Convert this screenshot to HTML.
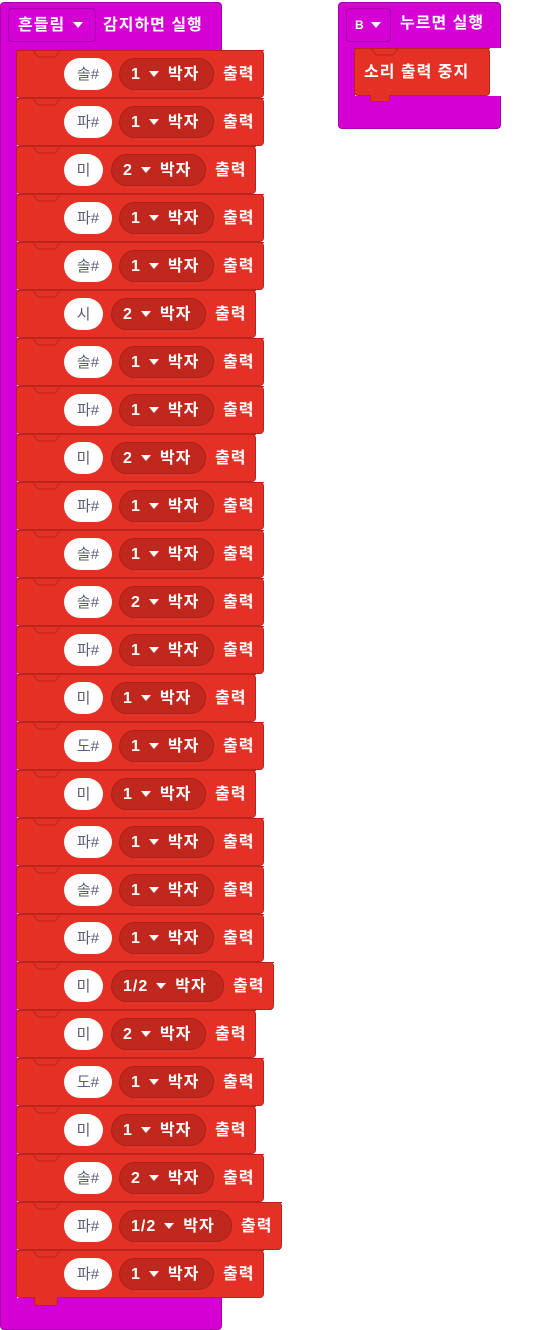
<!DOCTYPE html>
<html><head><meta charset="utf-8"><style>
*{box-sizing:border-box;margin:0;padding:0}
body{width:542px;height:1330px;background:#fff;position:relative;overflow:hidden;font-family:"Liberation Sans","Noto Sans CJK KR",sans-serif;font-weight:bold;font-size:16px;letter-spacing:1px;color:#fff}
.hat{position:absolute;background:#d400d4;border:1px solid #a900a9;border-radius:4px}
.dd{position:absolute;border:1px solid #a900a9;border-radius:4px;background:#d400d4;height:34px;line-height:33px;padding-left:9px}
.tri{display:inline-block;width:0;height:0;border-left:5px solid transparent;border-right:5px solid transparent;border-top:6px solid #fff;vertical-align:middle;margin:0 9px 2px 8px}
.b{position:absolute;left:16px;height:48px;background:#e53025;border:1px solid #b8251c;border-radius:4px}
.b svg{position:absolute;left:-1px;top:-1px;width:calc(100% + 2px);height:10px;overflow:hidden}
.o{position:absolute;top:7px;left:47px;height:32px;background:#fff;border-radius:16px;color:#575e75;font-weight:normal;text-align:center;line-height:33px;font-size:15px;letter-spacing:0}
.n2{width:48px}.n1{width:39px}
.p{position:absolute;top:7px;height:32px;background:#c0281e;border:1px solid #a8221a;border-radius:16px;line-height:32px;padding-left:11px;white-space:nowrap}
.s1{width:95px}.sh{width:113px}
.t{position:absolute;top:8px;line-height:32px}
</style></head><body>

<div class="hat" style="left:0;top:2px;width:222px;height:1328px"></div>
<div style="position:absolute;left:16px;top:50px;width:300px;height:1248px;background:#fff"></div>
<div style="position:absolute;left:0;top:50px;width:17px;height:1250px;background:#d400d4;border-left:1px solid #a900a9"></div>
<div class="dd" style="left:8px;top:8px;width:88px">흔들림<span class="tri" style="margin-right:0"></span></div>
<div style="position:absolute;left:103px;top:9px;line-height:34px">감지하면 실행</div>

<div class="hat" style="left:338px;top:2px;width:163px;height:127px"></div>
<div style="position:absolute;left:354px;top:48px;width:147px;height:48px;background:#fff"></div>
<div style="position:absolute;left:338px;top:48px;width:17px;height:50px;background:#d400d4;border-left:1px solid #a900a9"></div>
<div class="dd" style="left:346px;top:8px;width:45px;padding-left:8px;font-size:12px">B<span class="tri" style="margin:0 0 2px 6px"></span></div>
<div style="position:absolute;left:400px;top:8px;line-height:32px">누르면 실행</div>
<div class="b" style="left:354px;top:48px;width:136px;height:48px"><svg><path d="M0 .5H17L22 7H39L44 .5H300" fill="none" stroke="#b8251c"/></svg><span style="position:absolute;left:9px;top:8px;line-height:32px">소리 출력 중지</span></div>
<div style="position:absolute;left:370px;top:95px;width:20px;height:7px;background:#e53025;border:1px solid #b8251c;border-top:none;border-radius:0 0 3px 3px"></div>

<div class="b" style="top:50px;width:248px"><svg><path d="M0 .5H17L22 7H39L44 .5H300" fill="none" stroke="#b8251c"/></svg><div class="o n2">솔#</div><div class="p s1" style="left:102px">1<span class="tri"></span>박자</div><div class="t" style="left:206px">출력</div></div>
<div class="b" style="top:98px;width:248px"><svg><path d="M0 .5H17L22 7H39L44 .5H300" fill="none" stroke="#b8251c"/></svg><div class="o n2">파#</div><div class="p s1" style="left:102px">1<span class="tri"></span>박자</div><div class="t" style="left:206px">출력</div></div>
<div class="b" style="top:146px;width:240px"><svg><path d="M0 .5H17L22 7H39L44 .5H300" fill="none" stroke="#b8251c"/></svg><div class="o n1">미</div><div class="p s1" style="left:94px">2<span class="tri"></span>박자</div><div class="t" style="left:198px">출력</div></div>
<div class="b" style="top:194px;width:248px"><svg><path d="M0 .5H17L22 7H39L44 .5H300" fill="none" stroke="#b8251c"/></svg><div class="o n2">파#</div><div class="p s1" style="left:102px">1<span class="tri"></span>박자</div><div class="t" style="left:206px">출력</div></div>
<div class="b" style="top:242px;width:248px"><svg><path d="M0 .5H17L22 7H39L44 .5H300" fill="none" stroke="#b8251c"/></svg><div class="o n2">솔#</div><div class="p s1" style="left:102px">1<span class="tri"></span>박자</div><div class="t" style="left:206px">출력</div></div>
<div class="b" style="top:290px;width:240px"><svg><path d="M0 .5H17L22 7H39L44 .5H300" fill="none" stroke="#b8251c"/></svg><div class="o n1">시</div><div class="p s1" style="left:94px">2<span class="tri"></span>박자</div><div class="t" style="left:198px">출력</div></div>
<div class="b" style="top:338px;width:248px"><svg><path d="M0 .5H17L22 7H39L44 .5H300" fill="none" stroke="#b8251c"/></svg><div class="o n2">솔#</div><div class="p s1" style="left:102px">1<span class="tri"></span>박자</div><div class="t" style="left:206px">출력</div></div>
<div class="b" style="top:386px;width:248px"><svg><path d="M0 .5H17L22 7H39L44 .5H300" fill="none" stroke="#b8251c"/></svg><div class="o n2">파#</div><div class="p s1" style="left:102px">1<span class="tri"></span>박자</div><div class="t" style="left:206px">출력</div></div>
<div class="b" style="top:434px;width:240px"><svg><path d="M0 .5H17L22 7H39L44 .5H300" fill="none" stroke="#b8251c"/></svg><div class="o n1">미</div><div class="p s1" style="left:94px">2<span class="tri"></span>박자</div><div class="t" style="left:198px">출력</div></div>
<div class="b" style="top:482px;width:248px"><svg><path d="M0 .5H17L22 7H39L44 .5H300" fill="none" stroke="#b8251c"/></svg><div class="o n2">파#</div><div class="p s1" style="left:102px">1<span class="tri"></span>박자</div><div class="t" style="left:206px">출력</div></div>
<div class="b" style="top:530px;width:248px"><svg><path d="M0 .5H17L22 7H39L44 .5H300" fill="none" stroke="#b8251c"/></svg><div class="o n2">솔#</div><div class="p s1" style="left:102px">1<span class="tri"></span>박자</div><div class="t" style="left:206px">출력</div></div>
<div class="b" style="top:578px;width:248px"><svg><path d="M0 .5H17L22 7H39L44 .5H300" fill="none" stroke="#b8251c"/></svg><div class="o n2">솔#</div><div class="p s1" style="left:102px">2<span class="tri"></span>박자</div><div class="t" style="left:206px">출력</div></div>
<div class="b" style="top:626px;width:248px"><svg><path d="M0 .5H17L22 7H39L44 .5H300" fill="none" stroke="#b8251c"/></svg><div class="o n2">파#</div><div class="p s1" style="left:102px">1<span class="tri"></span>박자</div><div class="t" style="left:206px">출력</div></div>
<div class="b" style="top:674px;width:240px"><svg><path d="M0 .5H17L22 7H39L44 .5H300" fill="none" stroke="#b8251c"/></svg><div class="o n1">미</div><div class="p s1" style="left:94px">1<span class="tri"></span>박자</div><div class="t" style="left:198px">출력</div></div>
<div class="b" style="top:722px;width:248px"><svg><path d="M0 .5H17L22 7H39L44 .5H300" fill="none" stroke="#b8251c"/></svg><div class="o n2">도#</div><div class="p s1" style="left:102px">1<span class="tri"></span>박자</div><div class="t" style="left:206px">출력</div></div>
<div class="b" style="top:770px;width:240px"><svg><path d="M0 .5H17L22 7H39L44 .5H300" fill="none" stroke="#b8251c"/></svg><div class="o n1">미</div><div class="p s1" style="left:94px">1<span class="tri"></span>박자</div><div class="t" style="left:198px">출력</div></div>
<div class="b" style="top:818px;width:248px"><svg><path d="M0 .5H17L22 7H39L44 .5H300" fill="none" stroke="#b8251c"/></svg><div class="o n2">파#</div><div class="p s1" style="left:102px">1<span class="tri"></span>박자</div><div class="t" style="left:206px">출력</div></div>
<div class="b" style="top:866px;width:248px"><svg><path d="M0 .5H17L22 7H39L44 .5H300" fill="none" stroke="#b8251c"/></svg><div class="o n2">솔#</div><div class="p s1" style="left:102px">1<span class="tri"></span>박자</div><div class="t" style="left:206px">출력</div></div>
<div class="b" style="top:914px;width:248px"><svg><path d="M0 .5H17L22 7H39L44 .5H300" fill="none" stroke="#b8251c"/></svg><div class="o n2">파#</div><div class="p s1" style="left:102px">1<span class="tri"></span>박자</div><div class="t" style="left:206px">출력</div></div>
<div class="b" style="top:962px;width:258px"><svg><path d="M0 .5H17L22 7H39L44 .5H300" fill="none" stroke="#b8251c"/></svg><div class="o n1">미</div><div class="p sh" style="left:94px">1/2<span class="tri"></span>박자</div><div class="t" style="left:216px">출력</div></div>
<div class="b" style="top:1010px;width:240px"><svg><path d="M0 .5H17L22 7H39L44 .5H300" fill="none" stroke="#b8251c"/></svg><div class="o n1">미</div><div class="p s1" style="left:94px">2<span class="tri"></span>박자</div><div class="t" style="left:198px">출력</div></div>
<div class="b" style="top:1058px;width:248px"><svg><path d="M0 .5H17L22 7H39L44 .5H300" fill="none" stroke="#b8251c"/></svg><div class="o n2">도#</div><div class="p s1" style="left:102px">1<span class="tri"></span>박자</div><div class="t" style="left:206px">출력</div></div>
<div class="b" style="top:1106px;width:240px"><svg><path d="M0 .5H17L22 7H39L44 .5H300" fill="none" stroke="#b8251c"/></svg><div class="o n1">미</div><div class="p s1" style="left:94px">1<span class="tri"></span>박자</div><div class="t" style="left:198px">출력</div></div>
<div class="b" style="top:1154px;width:248px"><svg><path d="M0 .5H17L22 7H39L44 .5H300" fill="none" stroke="#b8251c"/></svg><div class="o n2">솔#</div><div class="p s1" style="left:102px">2<span class="tri"></span>박자</div><div class="t" style="left:206px">출력</div></div>
<div class="b" style="top:1202px;width:266px"><svg><path d="M0 .5H17L22 7H39L44 .5H300" fill="none" stroke="#b8251c"/></svg><div class="o n2">파#</div><div class="p sh" style="left:102px">1/2<span class="tri"></span>박자</div><div class="t" style="left:224px">출력</div></div>
<div class="b" style="top:1250px;width:248px"><svg><path d="M0 .5H17L22 7H39L44 .5H300" fill="none" stroke="#b8251c"/></svg><div class="o n2">파#</div><div class="p s1" style="left:102px">1<span class="tri"></span>박자</div><div class="t" style="left:206px">출력</div></div>
<div style="position:absolute;left:34px;top:1297px;width:24px;height:9px;background:#e53025;border:1px solid #b8251c;border-top:none;border-radius:0 0 4px 4px"></div>
</body></html>
